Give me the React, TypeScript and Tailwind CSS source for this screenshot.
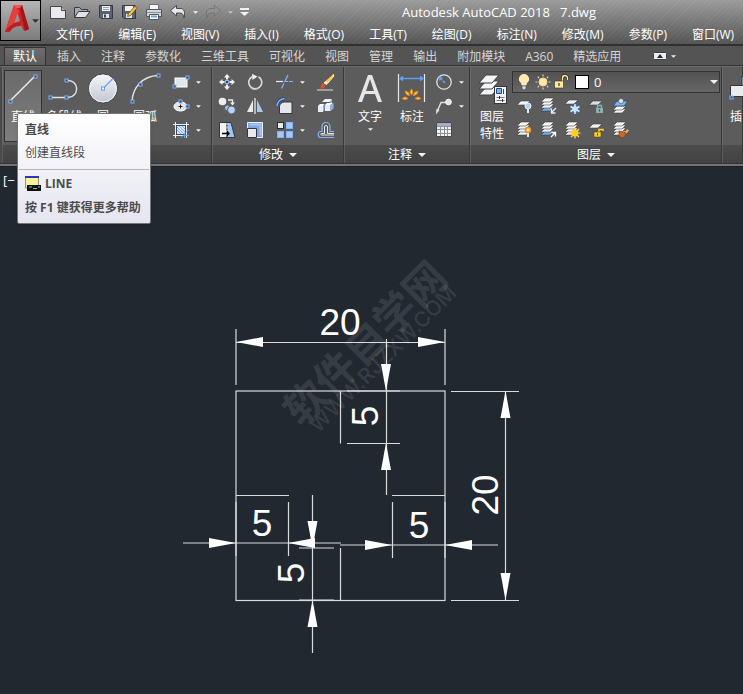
import type { ReactNode } from 'react';

const menus = ['文件(F)', '编辑(E)', '视图(V)', '插入(I)', '格式(O)', '工具(T)', '绘图(D)', '标注(N)', '修改(M)', '参数(P)', '窗口(W)'];

const tabs = ['默认', '插入', '注释', '参数化', '三维工具', '可视化', '视图', '管理', '输出', '附加模块', 'A360', '精选应用'];

function Icon({ children, size = 'w-[18px] h-[18px]', box = '0 0 18 18' }: { children: ReactNode; size?: string; box?: string }) {
  return (
    <svg viewBox={box} className={`${size} shrink-0`} fill="none" aria-hidden="true">
      {children}
    </svg>
  );
}

function Caret({ wide = false }: { wide?: boolean }) {
  return (
    <svg viewBox="0 0 8 4" className={wide ? 'w-2 h-1 shrink-0' : 'w-[5px] h-[3px] shrink-0'} aria-hidden="true">
      <path d="M0 0h8L4 4z" fill="#f2f2f2" />
    </svg>
  );
}

function Grip({ x, y }: { x: number; y: number }) {
  return <rect x={x - 1.5} y={y - 1.5} width="3" height="3" fill="#3c4a60" stroke="#7db4ff" />;
}

function ToolButton({ label, children }: { label: string; children: ReactNode }) {
  return (
    <button type="button" aria-label={label} className="flex h-6 items-center">
      {children}
    </button>
  );
}

function DropTool({ label, children }: { label: string; children: ReactNode }) {
  return (
    <button type="button" aria-label={label} className="flex h-6 items-center gap-[6px]">
      {children}
      <Caret />
    </button>
  );
}

function Panel({ title, width, children }: { title?: string; width: string; children: ReactNode }) {
  return (
    <section className={`${width} flex flex-col border-r border-[#383838]`}>
      <div className="flex h-[78px] items-start border-l border-[#6a6a6a] bg-[#5c5c5c] pt-[3px]">{children}</div>
      <button
        type="button"
        aria-label={title ?? '块'}
        className="flex h-[18px] items-center justify-center gap-[6px] border-l border-[#5c5c5c] bg-linear-to-b from-[#4b4b4b] to-[#424242] pt-[2px] text-white"
      >
        {title && <span>{title}</span>}
        {title && <Caret wide />}
      </button>
    </section>
  );
}

function Sheet({ y, fill = '#f5f5f5' }: { y: number; fill?: string }) {
  return <path d={`M6 ${y}h9l-4 4h-9z`} fill={fill} stroke="#3f4248" strokeWidth=".6" />;
}

function Stack({ blue = -1 }: { blue?: number }) {
  return (
    <>
      {[9, 6, 3, 0].map((y, i) => (
        <Sheet key={y} y={y + 1} fill={i === blue ? '#79acf0' : '#f5f5f5'} />
      ))}
    </>
  );
}

function QuickAccess() {
  return (
    <div className="flex h-[22px] items-center gap-[6px]">
      <button type="button" aria-label="新建">
        <Icon>
          <path d="M1.500 3.500h11l4 4v8h-15z" fill="#e9ebee" stroke="#44474c" />
          <path d="M12.500 3.500v4h4" fill="#b9bdc4" stroke="#44474c" />
        </Icon>
      </button>
      <button type="button" aria-label="打开">
        <Icon>
          <path d="M1.500 14.500v-10h5l2 2h6v3" fill="#a5a9ae" stroke="#373a40" />
          <path d="M1.500 14.500l4-6h11.500l-4.500 6z" fill="#dfe2e6" stroke="#373a40" />
        </Icon>
      </button>
      <button type="button" aria-label="保存">
        <Icon>
          <path d="M2.500 2.500h13v13h-11.500l-1.500-1.500z" fill="#596471" stroke="#343b45" />
          <path d="M5 3h8v5h-8z" fill="#eef0f2" />
          <path d="M6 4.500h6M6 6.500h6" stroke="#9aa3ae" />
          <path d="M6 11h6v4h-6z" fill="#dfe3e8" />
          <path d="M7 11.500h2v3h-2z" fill="#3b444f" />
        </Icon>
      </button>
      <button type="button" aria-label="另存为">
        <Icon>
          <path d="M1.500 2.500h13v13h-11.500l-1.500-1.500z" fill="#596471" stroke="#343b45" />
          <path d="M4 3h8v5h-8z" fill="#eef0f2" />
          <path d="M5 11h6v4h-6z" fill="#dfe3e8" />
          <path d="M14.500 2.500l2 2-7 8-3 1 1-3z" fill="#f7c64c" stroke="#69491c" strokeWidth=".8" />
          <path d="M13.500 3.800l2 2 1.300-1.500-2-1.900z" fill="#d96a3a" />
        </Icon>
      </button>
      <button type="button" aria-label="打印">
        <Icon>
          <path d="M4.500 1.500h9v5h-9z" fill="#f6f7f8" stroke="#6b7078" />
          <path d="M1.500 6.500h15v7h-15z" fill="#d3d6da" stroke="#54585e" />
          <path d="M2 9.500h14" stroke="#8d9198" />
          <path d="M4.500 11.500h9v5h-9z" fill="#fff" stroke="#54585e" />
          <path d="M6 13.500h6" stroke="#6fa3ea" strokeWidth="2" />
        </Icon>
      </button>
      <button type="button" aria-label="放弃" className="flex items-center gap-[6px]">
        <Icon>
          <path d="M1.500 7.500l6-5v3h3.500c4 0 5.500 3 4 9.500-.5-3.500-1.500-5-4.500-5h-3v3z" fill="#e6e8eb" stroke="#45484d" />
        </Icon>
        <Caret />
      </button>
      <button type="button" aria-label="重做" className="flex items-center gap-[6px] opacity-60">
        <Icon>
          <path d="M16.500 7.500l-6-5v3h-3.500c-4 0-5.500 3-4 9.500.5-3.500 1.500-5 4.500-5h3v3z" fill="#949494" stroke="#666" />
        </Icon>
        <Caret />
      </button>
      <button type="button" aria-label="自定义快速访问工具栏">
        <svg viewBox="0 0 9 8" className="ml-px h-2 w-[9px]" aria-hidden="true">
          <path d="M0 0h9v2h-9zM0 4h9l-4.500 4z" fill="#f2f2f2" />
        </svg>
      </button>
    </div>
  );
}

function DrawPanel() {
  return (
    <Panel title="绘图" width="w-[210px] shrink-0">
      <button type="button" className="ml-px flex h-[72px] w-[38px] flex-col items-center border border-[#333] bg-linear-to-b from-[#6b6b6b] to-[#7d7d7d] pt-[2px] text-white">
        <Icon size="w-8 h-8" box="0 0 32 32">
          <path d="M3 28L28 3" stroke="#eee" strokeWidth="1.400" />
          <Grip x={3.500} y={28.500} />
          <Grip x={28.500} y={3.500} />
        </Icon>
        <span className="mt-1">直线</span>
      </button>
      <button type="button" className="flex w-11 flex-col items-center pt-[3px] text-white">
        <Icon size="w-8 h-8" box="0 0 32 32">
          <path d="M2 24.500h18c12-1 11-17 0-17" stroke="#e4e4e4" strokeWidth="1.400" />
          <Grip x={2.500} y={24.500} />
          <Grip x={18.500} y={24.500} />
          <Grip x={18.500} y={7.500} />
        </Icon>
        <span className="mt-1">多段线</span>
      </button>
      <button type="button" className="flex w-[34px] flex-col items-center pt-[3px] text-white">
        <Icon size="w-8 h-8" box="0 0 32 32">
          <defs>
            <linearGradient id="disc" x1="0" y1="0" x2="0" y2="1">
              <stop offset="0" stopColor="#f6f7f9" />
              <stop offset="1" stopColor="#c0c6d0" />
            </linearGradient>
          </defs>
          <circle cx="16" cy="15.500" r="14.500" fill="url(#disc)" stroke="#393d44" />
          <circle cx="16" cy="15.500" r="13.500" stroke="#f4f5f7" />
          <path d="M16 15.500L26 5.500" stroke="#6aa3ee" strokeWidth="1.300" />
          <rect x="14.500" y="14" width="3" height="3" fill="#fff" stroke="#5f9df0" />
        </Icon>
        <span className="mt-1">圆</span>
      </button>
      <button type="button" className="flex w-[50px] flex-col items-center pt-[3px] text-white">
        <Icon size="w-8 h-8" box="0 0 32 32">
          <path d="M3 28C4 15 13 3 29 2.500" stroke="#e4e4e4" strokeWidth="1.400" />
          <Grip x={3.500} y={28.500} />
          <Grip x={11.500} y={11.500} />
          <Grip x={29.500} y={2.500} />
        </Icon>
        <span className="mt-1">圆弧</span>
      </button>
      <div className="ml-[2px] flex flex-col">
        <DropTool label="矩形">
          <Icon>
            <rect x="3" y="5" width="12" height="9" fill="#e3e6eb" stroke="#fff" />
            <Grip x={15.500} y={4.500} />
            <Grip x={2.500} y={13.500} />
          </Icon>
        </DropTool>
        <DropTool label="椭圆">
          <Icon>
            <ellipse cx="8.500" cy="9.500" rx="6.500" ry="4.500" fill="#e3e6eb" stroke="#fff" />
            <path d="M8.500 7.500v4M6.500 9.500h4" stroke="#222" />
            <Grip x={8.500} y={4.500} />
            <Grip x={15.500} y={9.500} />
          </Icon>
        </DropTool>
        <DropTool label="图案填充">
          <Icon>
            <rect x="3.500" y="3.500" width="11" height="11" fill="#3a4a66" />
            <rect x="5" y="5" width="8" height="8" fill="#dce8fa" />
            <path d="M5 6l7 7M5 9l4 4M7 5l6 6M10 5l3 3" stroke="#7fa9e4" />
            <path d="M1 3.500h16M1 14.500h16M3.500 1v16M14.500 1v16" stroke="#eee" />
            <path d="M9 16.500l8-8M12.500 12v5M11 14.500h6" stroke="#6aa3ee" />
          </Icon>
        </DropTool>
      </div>
    </Panel>
  );
}

function ModifyPanel() {
  return (
    <Panel title="修改" width="w-[132px] shrink-0">
      <div className="grid grid-cols-[28px_30px_41px_18px] pl-[5px]">
        <ToolButton label="移动">
          <Icon>
            <path d="M9 1l3 3.500h-2v2h-2v-2h-2zM9 17l3-3.500h-2v-2h-2v2h-2zM1 9l3.500-3v2h2v2h-2v2zM17 9l-3.500-3v2h-2v2h2v2z" fill="#f2f2f2" />
            <rect x="7.500" y="7.500" width="3" height="3" fill="#3c4a60" stroke="#7db4ff" />
          </Icon>
        </ToolButton>
        <ToolButton label="旋转">
          <Icon>
            <path d="M6 3.700a6.500 6.500 0 1 0 6.500 0" stroke="#dcdcdc" strokeWidth="1.600" />
            <path d="M6 1l5.500 2.500L6.500 7z" fill="#f2f2f2" />
            <path d="M4 14.500a6.500 6.500 0 0 0 8 1" stroke="#9dbbe8" />
          </Icon>
        </ToolButton>
        <DropTool label="修剪">
          <Icon>
            <path d="M0 8.500h7" stroke="#eee" strokeWidth="1.200" />
            <path d="M9 8.500h3M13 8.500h4" stroke="#7db4ff" strokeWidth="1.200" />
            <path d="M12 2L5.500 15.500" stroke="#7db4ff" strokeWidth="1.300" strokeDasharray="8 1.500" />
          </Icon>
        </DropTool>
        <ToolButton label="删除">
          <Icon>
            <path d="M16.500 .5l1.500 1.500-8.500 10-3-2.500z" fill="#f8c65a" stroke="#5e3e13" strokeWidth=".6" />
            <path d="M15.500 2l1.500 1-6 7" stroke="#fff2c8" />
            <path d="M8.500 8l2.500 2-1.500 2-3-2z" fill="#e9eaec" />
            <path d="M5.500 10l3 2.500c-1 3-3.500 3.500-5.500 3 1-1.500.5-4 2.500-5.500z" fill="#e04f1c" />
            <path d="M0 17h16" stroke="#e2e2e2" />
          </Icon>
        </ToolButton>

        <ToolButton label="复制">
          <Icon>
            <circle cx="4.500" cy="4.500" r="3.800" fill="#eceef1" />
            <circle cx="9.500" cy="11" r="3" fill="#9fbfee" stroke="#5c5c5c" />
            <circle cx="13.500" cy="13" r="4" fill="#b9d2f7" stroke="#5c5c5c" />
            <path d="M10 3h4.500v3" stroke="#eee" strokeWidth="1.300" />
            <path d="M12 5.500h5l-2.500 3z" fill="#eee" />
          </Icon>
        </ToolButton>
        <ToolButton label="镜像">
          <Icon>
            <path d="M7 3v12H1z" fill="#e9ebee" />
            <path d="M11 3v12h6z" fill="#a8c9f2" />
            <path d="M9 1v16" stroke="#f4f4f4" strokeWidth="1.200" />
          </Icon>
        </ToolButton>
        <DropTool label="圆角">
          <Icon>
            <path d="M3.500 16.500v-7c0-2.500 2.500-4.500 5-4.500h7.500v11.500z" fill="#e3e6eb" stroke="#34373c" />
            <path d="M1 9C1.500 5 4.500 2 8.500 1.500" stroke="#203c68" strokeWidth="3" />
            <path d="M1 9C1.500 5 4.500 2 8.500 1.500" stroke="#7db4ff" strokeWidth="1.500" />
          </Icon>
        </DropTool>
        <ToolButton label="分解">
          <Icon>
            <path d="M5 5l3-3h7l-2 3z" fill="#f1f4f9" />
            <path d="M13 5l2-3v3.500l-2 2z" fill="#8db2e8" />
            <path d="M1 9h5v6H1zM8 8h5.500v6H8z" fill="#e6edf8" />
            <path d="M1 9l2-2h4.500L6 9zM8 8l2-2h6l-2.500 2z" fill="#fbfcfe" />
            <path d="M6 9l1.500-2v6L6 15zM13.500 8L16.500 6v5.500l-3 2.500z" fill="#8db2e8" />
          </Icon>
        </ToolButton>

        <ToolButton label="拉伸">
          <Icon>
            <path d="M1.500 1.500h7.500v15h-7.500z" fill="#f2f3f5" stroke="#33363b" />
            <path d="M9 1.500h4l4 15h-8z" fill="#9fc5f5" stroke="#33363b" />
            <path d="M9 2v14" stroke="#f2f3f5" strokeDasharray="2 1.500" />
            <path d="M4 12.500h6" stroke="#000" strokeWidth="1.500" />
            <path d="M9 9.500l3 3-3 3z" fill="#000" />
          </Icon>
        </ToolButton>
        <ToolButton label="缩放">
          <Icon>
            <path d="M1.500 1.500h15v15h-15z" fill="#7fa8e0" stroke="#e8effa" />
            <path d="M3.500 3.500h11v11" stroke="#a6c5f0" strokeWidth="2" />
            <path d="M1.500 7.500h9v9h-9z" fill="#e7e9ec" stroke="#33363b" />
          </Icon>
        </ToolButton>
        <DropTool label="阵列">
          <Icon>
            <rect x="1.500" y="1.500" width="6" height="6" fill="#e9eaec" stroke="#292c30" />
            <rect x="10.500" y="1.500" width="6" height="6" fill="#a9c7f3" stroke="#7db4ff" />
            <rect x="1.500" y="10.500" width="6" height="6" fill="#a9c7f3" stroke="#7db4ff" />
            <rect x="10.500" y="10.500" width="6" height="6" fill="#a9c7f3" stroke="#7db4ff" />
          </Icon>
        </DropTool>
        <ToolButton label="偏移">
          <Icon>
            <path d="M17 16.500H3.500c-3 0-3-6 0-6H5V5.500a4 4 0 0 1 8 0v5h4" stroke="#83b4f6" strokeWidth="1.200" />
            <path d="M17 14H4.500c-1 0-1-1.500 0-1.500h3V6a1.500 1.500 0 0 1 3 0v6.500H17" stroke="#e6e6e6" />
          </Icon>
        </ToolButton>
      </div>
    </Panel>
  );
}

function AnnotatePanel() {
  return (
    <Panel title="注释" width="w-[126px] shrink-0">
      <button type="button" className="ml-[5px] flex w-10 flex-col items-center pt-[3px] text-white">
        <Icon size="w-8 h-8" box="0 0 32 32">
          <path d="M4 29L14 2h4l10 27h-4l-3-8H11l-3 8zM12 18h8L16 6z" fill="#e6e6e6" fillRule="evenodd" />
        </Icon>
        <span className="mt-1">文字</span>
        <span className="mt-[3px]">
          <Caret />
        </span>
      </button>
      <button type="button" className="flex w-11 flex-col items-center pt-[3px] text-white">
        <Icon size="w-8 h-8" box="0 0 32 32">
          <path d="M2.500 1v28M28.500 1v28" stroke="#e8e8e8" strokeWidth="1.200" />
          <path d="M4 5.500h23" stroke="#62a0f5" strokeWidth="1.400" />
          <path d="M3 5.500l4-3v6zM28 5.500l-4-3v6z" fill="#62a0f5" />
          <path
            d="M15.500 16l1.500 3-1.500 3-1.500-3zM9 18l3.500 1.500 1 3-3-1zM22 18l-3.500 1.500-1 3 3-1zM6 25.500l3-1.500 3 1.500-3 1zM25 25.500l-3-1.500-3 1.500 3 1z"
            fill="#ffd24a"
            stroke="#f08a1c"
            strokeWidth="1"
          />
        </Icon>
        <span className="mt-1">标注</span>
      </button>
      <div className="ml-px flex flex-col">
        <DropTool label="半径标注">
          <Icon>
            <circle cx="9" cy="9" r="7.200" stroke="#e2e2e2" strokeWidth="1.300" />
            <path d="M10 10L5 5" stroke="#62a0f5" strokeDasharray="3 1" strokeWidth="1.500" />
            <path d="M3.500 3.500l4.500 1-3.500 3.500z" fill="#62a0f5" />
          </Icon>
        </DropTool>
        <DropTool label="引线">
          <Icon>
            <path d="M2 15l4-9.500h5" stroke="#e2e2e2" strokeWidth="1.400" />
            <path d="M1 17.500l.5-6 3 1.500z" fill="#e2e2e2" />
            <circle cx="13.500" cy="5" r="2.800" fill="#d8e5f8" stroke="#fff" />
          </Icon>
        </DropTool>
        <ToolButton label="表格">
          <Icon>
            <path d="M1.500 1.500h15v14h-15z" fill="#f2f3f5" stroke="#464a51" />
            <path d="M2 2h14v3h-14z" fill="#a3afc2" />
            <path d="M2 5.500h14M2 8.500h14M2 12.500h14M5.500 5v10M9.500 5v10M12.500 5v10" stroke="#8c919a" />
          </Icon>
        </ToolButton>
      </div>
    </Panel>
  );
}

function Padlock({ x, y, color }: { x: number; y: number; color: string }) {
  return (
    <>
      <path d={`M${x + 1.5} ${y}v-2.500h4v2.500`} stroke={color} strokeWidth="1.400" />
      <rect x={x} y={y} width="7" height="5" fill={color} />
      <path d={`M${x + 3.5} ${y + 1.5}v2`} stroke="#3d4c4c" strokeWidth="1" />
    </>
  );
}

function LayersPanel() {
  return (
    <Panel title="图层" width="w-[252px] shrink-0">
      <button type="button" className="ml-px flex w-10 flex-col items-center pt-[3px] leading-[17px] text-white">
        <Icon size="w-8 h-8" box="0 0 32 32">
          {[14, 8, 2].map((y) => (
            <path key={y} d={`M10 ${y}h13l-7 8H3z`} fill="#f5f5f5" stroke="#3f4248" />
          ))}
          <rect x="18.500" y="13.500" width="12" height="17" fill="#f2f3f5" stroke="#33363b" />
          <path d="M20.500 15.500h5v5h-5z" fill="#7fb0f5" stroke="#2b4c80" />
          <path d="M27.500 16v5" stroke="#2b4c80" />
          <path d="M20.500 24.500h8M20.500 27.500h8" stroke="#777" />
          <path d="M23.500 23v3M26.500 26v3" stroke="#333" />
        </Icon>
        <span className="mt-[3px] w-6">图层 特性</span>
      </button>
      <div className="flex min-w-0 flex-1 flex-col pr-px pt-px">
        <label className="mb-px flex h-[22px] items-center border border-[#333] bg-linear-to-b from-[#525252] to-[#666] pl-[2px] text-white">
          <Icon>
            <path d="M9 1.500a4.500 4.500 0 0 1 3 8c-.8.800-1 1.500-1 2.500H7c0-1-.2-1.700-1-2.500a4.500 4.500 0 0 1 3-8z" fill="#ffe9a8" stroke="#fff5d2" />
            <path d="M7 13h4v2.500l-2 1.500-2-1.500z" fill="#d5d8dc" stroke="#444" strokeWidth=".5" />
          </Icon>
          <span className="ml-px flex">
            <Icon>
              <circle cx="9" cy="9" r="4" fill="#ffe7a6" stroke="#f8d68a" />
              <path d="M9 1.500v2M9 14.500v2M1.500 9h2M14.500 9h2M3.700 3.700l1.400 1.400M12.900 12.900l1.400 1.400M3.700 14.300l1.400-1.400M12.900 5.100l1.400-1.400" stroke="#d8d3c6" strokeWidth="1.200" />
            </Icon>
          </span>
          <Icon>
            <path d="M10.500 8V5a2.500 2.500 0 0 1 5 0v2" stroke="#222" strokeWidth="3" />
            <path d="M10.500 8V5a2.500 2.500 0 0 1 5 0v2" stroke="#ffe79c" strokeWidth="1.500" />
            <rect x="2.500" y="8" width="9" height="7" fill="#ffe79c" stroke="#333" strokeWidth=".6" />
            <path d="M7 10v3" stroke="#333" strokeWidth="1.200" />
          </Icon>
          <span className="ml-[5px] h-[14px] w-[14px] shrink-0 border border-black bg-white" />
          <select aria-label="图层" className="ml-[5px] min-w-0 flex-1 appearance-none bg-transparent text-[13px] leading-4 text-white">
            <option>0</option>
          </select>
          <span className="mr-px flex">
            <Caret wide />
          </span>
        </label>
        <div className="grid grid-cols-[repeat(5,18px)] gap-x-[6px] pl-[3px]">
          <ToolButton label="关">
            <Icon>
              <Sheet y={4} />
              <circle cx="13" cy="9" r="3" fill="#a8d4ff" stroke="#e3f1ff" />
              <path d="M13 12v4" stroke="#e8e8e8" strokeWidth="2" />
            </Icon>
          </ToolButton>
          <ToolButton label="隔离">
            <Icon>
              <Stack blue={0} />
              <path d="M17 11l-4 4M12.500 12v4h4" stroke="#eee" strokeWidth="1.300" />
            </Icon>
          </ToolButton>
          <ToolButton label="冻结">
            <Icon>
              <Sheet y={3} />
              <circle cx="12" cy="12" r="4.500" fill="#3c74bd" />
              <path d="M12 7v10M7.500 9.500l9 5M7.500 14.500l9-5" stroke="#d9ecff" strokeWidth="1.500" />
              <circle cx="12" cy="12" r="2.500" stroke="#d9ecff" strokeWidth=".8" />
            </Icon>
          </ToolButton>
          <ToolButton label="锁定">
            <Icon>
              <Sheet y={4} fill="#d9dde5" />
              <Padlock x={9} y={11} color="#8cb0ae" />
            </Icon>
          </ToolButton>
          <ToolButton label="置为当前">
            <Icon>
              <Sheet y={12} />
              <Sheet y={9} />
              <path d="M6 4h11l-4 5h-11z" fill="#82b4f3" stroke="#29456e" strokeWidth=".8" />
              <circle cx="10" cy="4" r="2.500" fill="#e1e6ee" stroke="#444" strokeWidth=".6" />
            </Icon>
          </ToolButton>
          <ToolButton label="打开所有图层">
            <Icon>
              <Stack />
              <circle cx="13" cy="9" r="2.500" fill="#ffe68c" stroke="#f2891d" strokeWidth="1.500" />
              <path d="M13 12v4" stroke="#e8e8e8" strokeWidth="2" />
            </Icon>
          </ToolButton>
          <ToolButton label="取消隔离">
            <Icon>
              <Stack blue={0} />
              <path d="M12 16l4-4M12.500 11.500h4v4" stroke="#fff" strokeWidth="1.300" />
            </Icon>
          </ToolButton>
          <ToolButton label="解冻所有图层">
            <Icon>
              <Stack />
              <path d="M12 6.500v11M6.500 12h11M8 8l8 8M8 16l8-8" stroke="#ffe27a" strokeWidth="1.200" />
              <circle cx="12" cy="12" r="3.500" fill="#ffcc21" />
            </Icon>
          </ToolButton>
          <ToolButton label="解锁">
            <Icon>
              <Sheet y={3} />
              <path d="M12 11V8.500h4V10" stroke="#ffcf2c" strokeWidth="1.500" />
              <rect x="7" y="11" width="7" height="5" fill="#ffcf2c" stroke="#4e3d05" strokeWidth=".5" />
              <path d="M10.500 12.500v2" stroke="#4e3d05" />
            </Icon>
          </ToolButton>
          <ToolButton label="匹配图层">
            <Icon>
              <Stack />
              <path d="M16.500 8l1.500 1.500-2.500 3-2-1.500z" fill="#f2a65a" />
              <path d="M8 10l6 1.500 1 2-3 3.500-4-1.500z" fill="#c9692a" stroke="#6b3413" strokeWidth=".6" />
            </Icon>
          </ToolButton>
        </div>
      </div>
    </Panel>
  );
}

function HelpTip() {
  return (
    <div role="tooltip" className="absolute left-[17px] top-[113px] w-[134px] rounded-[2px] border border-[#767676] bg-linear-to-b from-white to-[#e4e5f0] pb-[7px] pt-2 text-[#4c4c4c] shadow-sm">
      <p className="px-[7px] font-bold leading-4">直线</p>
      <p className="mt-[7px] px-[7px] leading-4">创建直线段</p>
      <hr className="mx-px mt-2 border-[#b4b4b4]" />
      <p className="mt-[6px] flex items-center gap-1 px-[7px] font-bold leading-4">
        <Icon size="w-4 h-4" box="0 0 16 16">
          <path d="M.5 1h13v11H.500z" fill="#f7f396" stroke="#8f8f7c" />
          <path d="M0 0h14v2H0z" fill="#2438c4" />
          <path d="M2 9h14v6H2z" fill="#111" />
          <path d="M4 11h3M8 12.500h4M13 11h2" stroke="#aaa" />
        </Icon>
        LINE
      </p>
      <p className="mt-2 px-[7px] font-bold leading-4">按 F1 键获得更多帮助</p>
    </div>
  );
}

// [tip x, tip y, direction the arrow points to]
const arrows: [number, number, 'l' | 'r' | 'u' | 'd'][] = [
  [236, 342, 'l'],
  [445, 342, 'r'],
  [386, 391, 'd'],
  [386, 443, 'u'],
  [505.5, 391, 'u'],
  [505.5, 600, 'd'],
  [236, 543, 'r'],
  [288, 543, 'l'],
  [392, 545, 'r'],
  [445, 545, 'l'],
  [312.5, 548, 'd'],
  [312.5, 600, 'u'],
];

const turn = { l: 0, u: 90, r: 180, d: 270 };

function Drawing() {
  return (
    <svg viewBox="0 167 743 527" className="block w-full" role="img" aria-label="7.dwg" fontFamily="'Liberation Sans', Arial, sans-serif">
      <g stroke="#d9dbdd" strokeWidth="1.200" fill="none">
        <rect x="236" y="391" width="209" height="209.500" />
        <path d="M340.500 391v52.500M340.500 548v52M236 495.500h53M392 495.500h53" />
        <path d="M236 329v56M445 329v56M236 342.500h209" />
        <path d="M386.500 339v156M347 391h53M347 443.500h53" />
        <path d="M451 391.500h68M451 600.500h68M505.500 391v209" />
        <path d="M236 502v54M288.500 502v54M183 543h158" />
        <path d="M392.500 502v56M445 502v56M340 545h158" />
        <path d="M299 548h35M299 600h35M312.500 495v158" />
      </g>
      <g fill="#fff">
        {arrows.map(([x, y, dir]) => (
          <path key={`${x}-${y}`} d="M0 0L27 -5V5z" transform={`translate(${x} ${y}) rotate(${turn[dir]})`} />
        ))}
      </g>
      <g fill="#fff" fontSize="37" textAnchor="middle">
        <text x="340" y="335">20</text>
        <text x="262" y="536">5</text>
        <text x="419" y="538">5</text>
        <text transform="translate(378 416) rotate(-90)">5</text>
        <text transform="translate(498 495) rotate(-90)">20</text>
        <text transform="translate(304 573) rotate(-90)">5</text>
      </g>
      <g fill="#fff" fillOpacity=".11" textAnchor="middle">
        <text transform="translate(376 354) rotate(-45)" fontSize="42" fontWeight="700" fontFamily="'Noto Sans CJK SC', sans-serif">
          软件自学网
        </text>
        <text transform="translate(388 364) rotate(-45)" fontSize="21" fontWeight="500" fontFamily="Inter, sans-serif">
          WWW.RJZXW.COM
        </text>
      </g>
    </svg>
  );
}

export default function App() {
  return (
    <div className="relative flex min-h-screen flex-col overflow-hidden bg-[#222830] font-['Open_Sans','Noto_Sans_CJK_SC',sans-serif] text-[12px] leading-4">
      <header className="flex h-[46px] border-b-2 border-[#303030] bg-[repeating-linear-gradient(135deg,#ffffff0a_0_1px,transparent_1px_4px),linear-gradient(#9c9c9c,#545454)]">
        <button type="button" aria-label="应用程序菜单" className="flex h-[41px] w-[41px] shrink-0 items-center gap-[2px] border border-black bg-linear-to-b from-[#b5b5b5] to-[#7c7c7c] pl-[3px]">
          <svg viewBox="0 0 26 32" className="h-8 w-[26px]" aria-hidden="true">
            <path d="M10 0h8l7 24-5 2-3-6-8 1-3 6H1z" fill="#cf2429" />
            <path d="M10 0L1 27l5-1L15 6z" fill="#e2413b" />
            <path d="M15 0h3l7 24-4 2z" fill="#a2161b" />
            <path d="M13.500 8l2.500 8-6 2z" fill="#9a8f8f" />
            <path d="M1 27c3-6 8-9 15-9l1 3c-5 0-8 1-11 5z" fill="#b71f24" />
            <path d="M10 0h8l-2 3h-4z" fill="#ee5a50" />
          </svg>
          <svg viewBox="0 0 8 4" className="h-1 w-[7px]" aria-hidden="true">
            <path d="M0 0h8L4 4z" fill="#2c3138" />
          </svg>
        </button>
        <div className="min-w-0 flex-1">
          <div className="flex items-center pl-2">
            <QuickAccess />
            <h1 className="ml-[153px] whitespace-pre text-[13px] leading-6 text-white">Autodesk AutoCAD 2018{'   '}7.dwg</h1>
          </div>
          <nav className="flex gap-[25px] whitespace-nowrap pl-[15px] pt-[3px] text-white">
            {menus.map((menu) => (
              <button key={menu} type="button">
                {menu}
              </button>
            ))}
          </nav>
        </div>
      </header>

      <div role="tablist" className="flex h-5 items-end gap-[2px] whitespace-nowrap border-b border-[#333] bg-[#545454] pl-1 text-[#d4d4d4]">
        {tabs.map((tab, i) => (
          <button
            key={tab}
            type="button"
            role="tab"
            aria-selected={i === 0}
            className={i === 0 ? 'h-[18px] border border-b-0 border-[#333] bg-linear-to-b from-[#6e6e6e] to-[#5c5c5c] px-2 pt-px text-white' : 'h-[18px] border border-b-0 border-transparent px-2 pt-px'}
          >
            {tab}
          </button>
        ))}
        <button type="button" aria-label="最小化功能区" className="ml-[21px] flex h-[18px] items-center gap-1">
          <svg viewBox="0 0 14 8" className="h-2 w-[14px]" aria-hidden="true">
            <rect x=".5" y=".5" width="13" height="7" rx="1" fill="#eceef2" stroke="#3a3e45" />
            <path d="M4 6l3-4 3 4z" fill="#23272e" />
          </svg>
          <Caret />
        </button>
      </div>

      <main className="flex flex-1 flex-col">
        <div className="flex overflow-hidden border-b border-t border-b-[#333] border-t-[#6b6b6b] bg-[#4a4a4a] pl-[2px]">
          <DrawPanel />
          <ModifyPanel />
          <AnnotatePanel />
          <LayersPanel />
          <Panel width="min-w-0 flex-1">
            <button type="button" aria-label="插入" className="flex flex-col items-start pl-[6px] pt-[3px] text-white">
              <Icon size="w-8 h-8" box="0 0 32 32">
                <path d="M13 3.500h12v20H13z" fill="#cfe0f6" stroke="#33363b" />
                <path d="M1.500 12.500h20v11h-20z" fill="#e9ebee" stroke="#33363b" />
                <Grip x={2.500} y={24.500} />
              </Icon>
              <span className="mt-1 pl-px">插</span>
            </button>
          </Panel>
        </div>
        <div className="h-[3px] border-b border-[#1c2026] bg-[#747474]" />
        <div className="relative">
          <button type="button" className="absolute left-[3px] top-[5px] text-[13px] text-white">
            [−
          </button>
          <Drawing />
        </div>
      </main>

      <HelpTip />
    </div>
  );
}
